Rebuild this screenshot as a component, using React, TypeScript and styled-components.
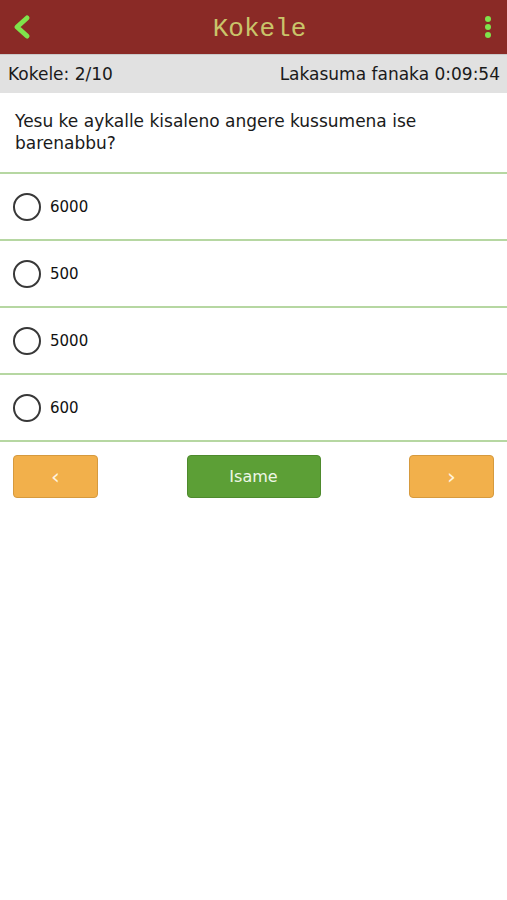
import styled, { createGlobalStyle } from "styled-components";

const GlobalStyle = createGlobalStyle`
  body {
    margin: 0;
    background: #ffffff;
    font-family: "DejaVu Sans", "Liberation Sans", sans-serif;
  }
`;

const options = ["6000", "500", "5000", "600"];

export default function App() {
  return (
    <>
      <GlobalStyle />
      <Page>
        <Header>
          <IconButton aria-label="back">
            <svg width="20" height="26" viewBox="0 0 20 26">
              <path
                d="M15 4 L5 13 L15 22"
                fill="none"
                stroke="#7fe34b"
                strokeWidth="5"
                strokeLinecap="round"
                strokeLinejoin="round"
              />
            </svg>
          </IconButton>
          <Title>Kokele</Title>
          <IconButton aria-label="menu">
            <svg width="10" height="24" viewBox="0 0 10 24">
              <circle cx="5" cy="4" r="3" fill="#7fe34b" />
              <circle cx="5" cy="12" r="3" fill="#7fe34b" />
              <circle cx="5" cy="20" r="3" fill="#7fe34b" />
            </svg>
          </IconButton>
        </Header>
        <StatusBar>
          <span>Kokele: 2/10</span>
          <span>Lakasuma fanaka 0:09:54</span>
        </StatusBar>
        <Question>Yesu ke aykalle kisaleno angere kussumena ise barenabbu?</Question>
        <OptionList>
          {options.map((o) => (
            <OptionRow key={o}>
              <Radio />
              <OptionText>{o}</OptionText>
            </OptionRow>
          ))}
        </OptionList>
        <ButtonRow>
          <NavButton>‹</NavButton>
          <SubmitButton>Isame</SubmitButton>
          <NavButton>›</NavButton>
        </ButtonRow>
      </Page>
    </>
  );
}

const Page = styled.div`
  width: 507px;
  min-height: 900px;
  background: #ffffff;
`;

const Header = styled.div`
  height: 54px;
  background: #8a2a26;
  display: flex;
  align-items: center;
  justify-content: space-between;
  padding: 0 14px 0 12px;
  box-sizing: border-box;
`;

const IconButton = styled.div`
  display: flex;
  align-items: center;
  justify-content: center;
  height: 30px;
`;

const Title = styled.div`
  font-family: "Liberation Mono", "DejaVu Sans Mono", monospace;
  font-size: 26px;
  color: #c9c46a;
  padding-top: 3px;
  margin-left: 4px;
`;

const StatusBar = styled.div`
  height: 39px;
  background: #e1e1e1;
  display: flex;
  align-items: center;
  justify-content: space-between;
  padding: 0 7px 0 8px;
  font-size: 17px;
  color: #1a1a1a;
  border-top: 1px solid #c9c9c9;
  box-sizing: border-box;
`;

const Question = styled.div`
  padding: 17px 60px 18px 15px;
  font-size: 17px;
  line-height: 22px;
  color: #1a1a1a;
`;

const OptionList = styled.div`
  border-top: 2px solid #b6d7a2;
`;

const OptionRow = styled.div`
  height: 65px;
  display: flex;
  align-items: center;
  gap: 9px;
  padding-left: 13px;
  border-bottom: 2px solid #b6d7a2;
`;

const Radio = styled.div`
  width: 24px;
  height: 24px;
  border: 2px solid #383838;
  border-radius: 50%;
`;

const OptionText = styled.span`
  font-size: 15px;
  color: #111111;
`;

const ButtonRow = styled.div`
  display: flex;
  justify-content: space-between;
  align-items: center;
  padding: 13px 13px 0 13px;
`;

const BaseButton = styled.div`
  height: 43px;
  display: flex;
  align-items: center;
  justify-content: center;
  border-radius: 4px;
  box-sizing: border-box;
  color: #ffffff;
`;

const NavButton = styled(BaseButton)`
  width: 85px;
  background: #f2b04b;
  border: 1.5px solid #d69a3e;
  font-size: 22px;
  color: #fff3df;
`;

const SubmitButton = styled(BaseButton)`
  width: 134px;
  background: #5c9f36;
  border: 1.5px solid #4e8a2d;
  font-size: 16px;
  color: #eef7e6;
`;
